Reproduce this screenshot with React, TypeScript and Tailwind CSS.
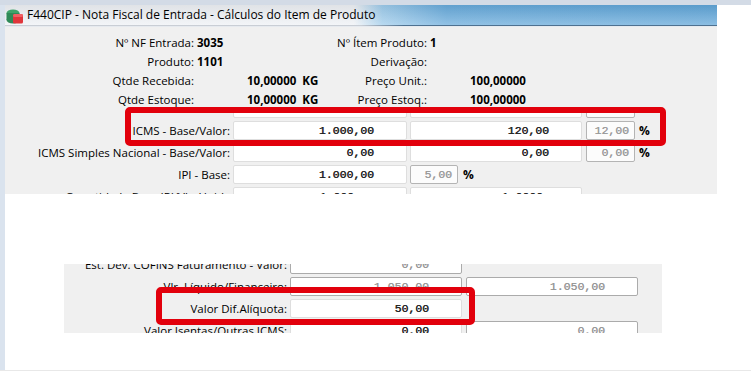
import React from "react";

const mono = "font-['Liberation_Mono',monospace] text-[11.5px]";

function Inp({
  w,
  v,
  kind,
  pr,
}: {
  w: string;
  v?: string;
  kind: "n" | "d" | "s";
  pr: string;
}) {
  const base =
    kind === "n"
      ? "bg-white border-[#dedede] text-[#222] [text-shadow:0.4px_0_0_#333]"
      : kind === "d"
      ? "bg-white border-[#ababab] text-[#959595] [text-shadow:0.3px_0_0_#aaa]"
      : "bg-[#fcfcfc] border-[#b4b4b4] text-[#9a9a9a] [text-shadow:0.3px_0_0_#aaa]";
  return (
    <div
      className={`${w} h-[19px] shrink-0 border rounded-[2px] flex items-center justify-end ${pr} ${base} ${mono}`}
    >
      {v}
    </div>
  );
}

function InfoRow({
  l1,
  v1,
  v1c,
  l2,
  v2,
  v2c,
}: {
  l1: string;
  v1: string;
  v1c: string;
  l2: string;
  v2: string;
  v2c: string;
}) {
  return (
    <div className="flex h-[19px] items-center whitespace-nowrap">
      <div className="w-[189px] text-right">{l1}</div>
      <div className={`w-[149px] font-bold ${v1c}`}>{v1}</div>
      <div className="w-[84px] flex justify-end">{l2}</div>
      <div className={`font-bold ${v2c}`}>{v2}</div>
    </div>
  );
}

function Row({ label, children }: { label: string; children?: React.ReactNode }) {
  return (
    <div className="flex h-[19px] items-center whitespace-nowrap">
      <div className="w-[228px] shrink-0 text-right pr-[3px]">{label}</div>
      {children}
    </div>
  );
}

function BRow({ label, children }: { label: string; children?: React.ReactNode }) {
  return (
    <div className="flex h-[19px] items-center whitespace-nowrap">
      <div className="w-[226px] shrink-0 text-right pr-[3px]">{label}</div>
      {children}
    </div>
  );
}

function Pct({ ml }: { ml: string }) {
  return <div className={`${ml} font-bold text-[12px]`}>%</div>;
}

function AppIcon() {
  return (
    <svg width="18" height="16" viewBox="0 0 18 16">
      <ellipse cx="7" cy="5" rx="6.5" ry="3.5" fill="#3fa36a" />
      <rect x="0.5" y="5" width="13" height="7" fill="#2f8a58" />
      <ellipse cx="7" cy="12" rx="6.5" ry="3.5" fill="#2f8a58" />
      <rect x="7" y="6" width="10" height="9.5" rx="1.5" fill="#e0363b" />
      <rect x="7" y="6" width="10" height="3" rx="1.5" fill="#f06064" />
    </svg>
  );
}

export default function App() {
  return (
    <div className="w-[751px] h-[372px] bg-white flex flex-col overflow-hidden relative font-['Open_Sans',sans-serif] text-[11.5px] text-black leading-none">
      <div className="h-[5px] shrink-0 bg-[#d3dbe6]" />
      <div className="flex h-[365px] shrink-0">
        <div className="w-[5px] shrink-0 bg-[#dae3ee]" />
        <div className="flex flex-col flex-1">
          {/* window */}
          <div className="w-[712px] flex flex-col">
            <div className="h-[20px] bg-[linear-gradient(to_right,#eef1f5_0%,#eef1f5_49%,#9dcbeb_53%,#67aadb_62%,#5fa5d8_100%)]">
              <div className="h-full flex items-center bg-[linear-gradient(to_bottom,rgba(0,0,0,0.06),rgba(255,255,255,0.28))]">
                <div className="ml-[1px] mt-[2px] w-[18px] flex">
                  <AppIcon />
                </div>
                <div className="ml-[3px] text-[12px] whitespace-nowrap">
                  F440CIP - Nota Fiscal de Entrada - Cálculos do Item de Produto
                </div>
              </div>
            </div>
            <div className="h-[1px] bg-[linear-gradient(to_right,#c9ced5_0%,#c9ced5_50%,#4e7190_56%,#4e7190_100%)]" />
            <div className="h-[1px] bg-[#e6eaef]" />
            <div className="h-[167px] bg-[#f0f0f0] flex flex-col">
              <div className="pt-[6px] flex flex-col">
                <InfoRow l1="Nº NF Entrada:" v1="3035" v1c="pl-[3px]" l2="Nº Ítem Produto:" v2="1" v2c="pl-[3px]" />
                <InfoRow l1="Produto:" v1="1101" v1c="pl-[3px]" l2="Derivação:" v2="" v2c="pl-[3px]" />
                <InfoRow l1="Qtde Recebida:" v1="10,00000  KG" v1c="pl-[53px] whitespace-pre" l2="Preço Unit.:" v2="100,00000" v2c="pl-[43px]" />
                <InfoRow l1="Qtde Estoque:" v1="10,00000  KG" v1c="pl-[53px] whitespace-pre" l2="Preço Estoq.:" v2="100,00000" v2c="pl-[43px]" />
              </div>
              <div className="mt-[3px] h-[82px] overflow-hidden">
                <div className="-mt-[13px] flex flex-col gap-[3px]">
                  <Row label="">
                    <Inp w="w-[174px]" kind="n" pr="pr-[32px]" />
                    <div className="ml-[3px]"><Inp w="w-[172px]" kind="n" pr="pr-[32px]" /></div>
                    <div className="ml-[4px]"><Inp w="w-[49px]" kind="s" pr="pr-[5px]" /></div>
                  </Row>
                  <Row label="ICMS - Base/Valor:">
                    <Inp w="w-[174px]" v="1.000,00" kind="n" pr="pr-[32px]" />
                    <div className="ml-[3px]"><Inp w="w-[172px]" v="120,00" kind="n" pr="pr-[32px]" /></div>
                    <div className="ml-[4px]"><Inp w="w-[49px]" v="12,00" kind="s" pr="pr-[5px]" /></div>
                    <Pct ml="ml-[4px]" />
                  </Row>
                  <Row label="ICMS Simples Nacional - Base/Valor:">
                    <Inp w="w-[174px]" v="0,00" kind="n" pr="pr-[32px]" />
                    <div className="ml-[3px]"><Inp w="w-[172px]" v="0,00" kind="n" pr="pr-[32px]" /></div>
                    <div className="ml-[4px]"><Inp w="w-[49px]" v="0,00" kind="s" pr="pr-[5px]" /></div>
                    <Pct ml="ml-[4px]" />
                  </Row>
                  <Row label="IPI - Base:">
                    <Inp w="w-[174px]" v="1.000,00" kind="n" pr="pr-[32px]" />
                    <div className="ml-[3px]"><Inp w="w-[48px]" v="5,00" kind="s" pr="pr-[5px]" /></div>
                    <Pct ml="ml-[5px]" />
                  </Row>
                  <Row label="Quantidade Base IPI/Vlr. Unid.:">
                    <Inp w="w-[174px]" v="1,000" kind="n" pr="pr-[52px]" />
                    <div className="ml-[3px]"><Inp w="w-[172px]" v="1,0000" kind="n" pr="pr-[38px]" /></div>
                  </Row>
                </div>
              </div>
            </div>
          </div>
          {/* bottom fragment */}
          <div className="mt-[70px] ml-[59px] w-[598px] h-[69px] bg-[#f0f0f0] overflow-hidden">
            <div className="-mt-[9px] flex flex-col gap-[3px]">
              <BRow label="Est. Dev. COFINS Faturamento - Valor:">
                <Inp w="w-[172px]" v="0,00" kind="d" pr="pr-[32px]" />
              </BRow>
              <BRow label="Vlr. Líquido/Financeiro:">
                <Inp w="w-[172px]" v="1.050,00" kind="d" pr="pr-[32px]" />
                <div className="ml-[4px]"><Inp w="w-[172px]" v="1.050,00" kind="d" pr="pr-[32px]" /></div>
              </BRow>
              <BRow label="Valor Dif.Alíquota:">
                <Inp w="w-[172px]" v="50,00" kind="n" pr="pr-[32px]" />
              </BRow>
              <BRow label="Valor Isentas/Outras ICMS:">
                <Inp w="w-[172px]" v="0,00" kind="n" pr="pr-[32px]" />
                <div className="ml-[4px]"><Inp w="w-[172px]" v="0,00" kind="d" pr="pr-[32px]" /></div>
              </BRow>
            </div>
          </div>
        </div>
      </div>
      <div className="h-[1px] shrink-0 bg-[#e8e8e8]" />

      {/* red highlight boxes */}
      <div className="absolute left-[125px] top-[107px] w-[541px] h-[39px] border-[6px] border-[#e2000c] rounded-[5px]" />
      <div className="absolute left-[156px] top-[287px] w-[319px] h-[38px] border-[6px] border-[#e2000c] rounded-[5px]" />
    </div>
  );
}
